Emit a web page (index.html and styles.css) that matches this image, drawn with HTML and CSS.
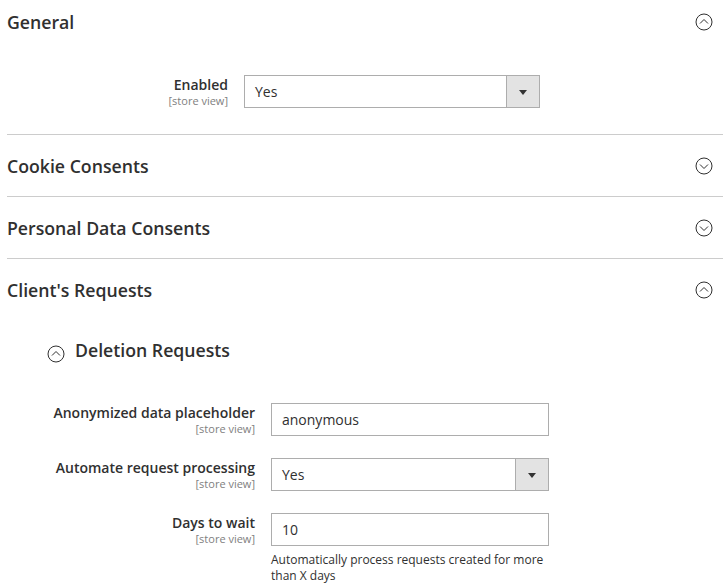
FILE: index.html
```html
<!DOCTYPE html>
<html>
<head>
<meta charset="utf-8">
<link rel="stylesheet" href="styles.css">
</head>
<body>
<div class="page">
  <section class="section section-first">
    <div class="section-head head-first">
      <span class="section-title">General</span>
      <svg class="toggle" width="18" height="18" viewBox="0 0 18 18"><circle cx="9" cy="9" r="8" /><polyline points="5,10.5 9,6.5 13,10.5" /></svg>
    </div>
    <div class="section-body general-body">
      <div class="row row-general">
        <div class="label"><span class="label-text">Enabled</span><span class="scope">[store view]</span></div>
        <div class="select"><span class="value">Yes</span><span class="arrow"><span class="tri"></span></span></div>
      </div>
    </div>
  </section>
  <section class="section">
    <div class="section-head">
      <span class="section-title">Cookie Consents</span>
      <svg class="toggle" width="18" height="18" viewBox="0 0 18 18"><circle cx="9" cy="9" r="8" /><polyline points="5,7.5 9,11.5 13,7.5" /></svg>
    </div>
  </section>
  <section class="section">
    <div class="section-head">
      <span class="section-title">Personal Data Consents</span>
      <svg class="toggle" width="18" height="18" viewBox="0 0 18 18"><circle cx="9" cy="9" r="8" /><polyline points="5,7.5 9,11.5 13,7.5" /></svg>
    </div>
  </section>
  <section class="section">
    <div class="section-head">
      <span class="section-title">Client's Requests</span>
      <svg class="toggle" width="18" height="18" viewBox="0 0 18 18"><circle cx="9" cy="9" r="8" /><polyline points="5,10.5 9,6.5 13,10.5" /></svg>
    </div>
    <div class="section-body requests-body">
      <div class="sub-head">
        <svg class="sub-toggle" width="18" height="18" viewBox="0 0 18 18"><circle cx="9" cy="9" r="8" /><polyline points="5,10.5 9,6.5 13,10.5" /></svg>
        <span class="sub-title">Deletion Requests</span>
      </div>
      <div class="rows">
        <div class="row row-sub">
          <div class="label"><span class="label-text">Anonymized data placeholder</span><span class="scope">[store view]</span></div>
          <div class="control"><div class="input">anonymous</div></div>
        </div>
        <div class="row row-sub">
          <div class="label"><span class="label-text">Automate request processing</span><span class="scope">[store view]</span></div>
          <div class="control"><div class="select"><span class="value">Yes</span><span class="arrow"><span class="tri"></span></span></div></div>
        </div>
        <div class="row row-sub">
          <div class="label"><span class="label-text">Days to wait</span><span class="scope">[store view]</span></div>
          <div class="control">
            <div class="input">10</div>
            <p class="note">Automatically process requests created for more than X days</p>
          </div>
        </div>
      </div>
    </div>
  </section>
</div>
</body>
</html>
```

FILE: styles.css
```css
html, body {
  margin: 0;
  padding: 0;
  background: #ffffff;
}

body {
  font-family: "Open Sans", "Liberation Sans", sans-serif;
  color: #303030;
  overflow: hidden;
}

.page {
  padding-left: 7px;
}

.section + .section {
  border-top: 1px solid #cccccc;
}

.section-head {
  height: 61px;
  display: flex;
  align-items: center;
  justify-content: space-between;
}

.head-first {
  height: 44px;
}

.section-title {
  font-size: 17.7px;
  font-weight: 600;
  color: #303030;
}

.toggle,
.sub-toggle {
  fill: none;
  stroke: #303030;
  stroke-width: 1;
}

.toggle {
  margin-right: 10px;
}

.general-body {
  padding-top: 31px;
  padding-bottom: 26px;
}

.row {
  display: flex;
  gap: 16px;
}

.label {
  display: flex;
  flex-direction: column;
  align-items: flex-end;
  text-align: right;
}

.label-text {
  font-size: 14px;
  font-weight: 600;
  line-height: 19px;
  color: #303030;
}

.scope {
  font-size: 11px;
  line-height: 14px;
  color: #808080;
}

.row-general .label {
  width: 221px;
}

.row-general .select {
  width: 296px;
}

.select,
.input {
  box-sizing: border-box;
  height: 33px;
  border: 1px solid #adadad;
  background: #ffffff;
  font-size: 14px;
  color: #303030;
}

.select {
  display: flex;
  align-items: stretch;
}

.select .value {
  flex: 1;
  display: flex;
  align-items: center;
  padding-left: 10px;
}

.select .arrow {
  width: 32px;
  border-left: 1px solid #adadad;
  background: #e3e3e3;
  display: flex;
  align-items: center;
  justify-content: center;
}

.tri {
  width: 0;
  height: 0;
  border-left: 4px solid transparent;
  border-right: 4px solid transparent;
  border-top: 5px solid #333333;
  margin-top: 1px;
}

.input {
  display: flex;
  align-items: center;
  padding-left: 10px;
}

.requests-body {
  padding-top: 14px;
}

.sub-head {
  display: flex;
  align-items: center;
  gap: 10px;
  height: 34px;
  padding-left: 40px;
}

.sub-toggle {
  margin-top: 6px;
}

.sub-title {
  font-size: 17.7px;
  font-weight: 600;
  margin-bottom: 3px;
}

.rows {
  margin-top: 35px;
  display: flex;
  flex-direction: column;
  gap: 22px;
}

.row-sub .label {
  width: 248px;
}

.row-sub .control {
  width: 278px;
}

.note {
  margin: 6px 0 0;
  font-size: 12px;
  line-height: 16px;
  color: #303030;
}
```
